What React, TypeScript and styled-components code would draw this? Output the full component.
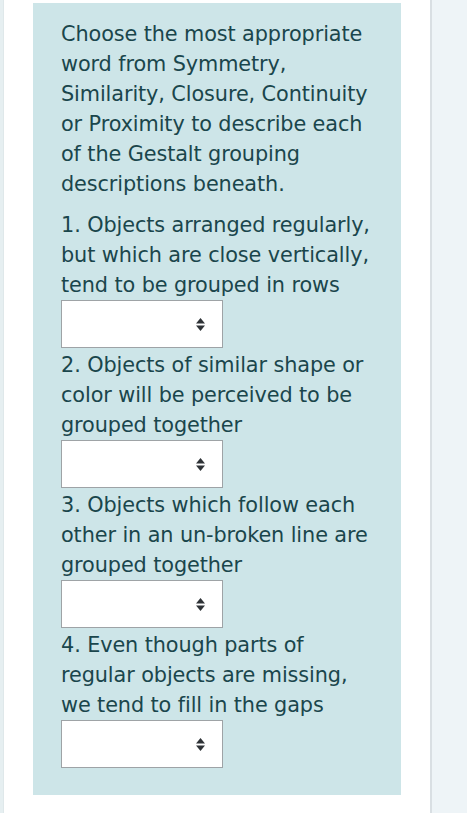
import styled, { createGlobalStyle } from 'styled-components';

const GlobalStyle = createGlobalStyle`
  html, body {
    margin: 0;
    padding: 0;
    background: #ffffff;
  }
  body {
    font-family: "DejaVu Sans", "Noto Sans", sans-serif;
  }
`;

const Page = styled.div`
  display: flex;
  width: 467px;
  height: 813px;
  overflow: hidden;
  background: #ffffff;
`;

const LeftEdge = styled.div`
  width: 3px;
  background: #e6eff1;
  border-right: 1px solid #dfe8ea;
`;

const Main = styled.div`
  width: 426px;
  padding: 3px 0 0 29px;
  box-sizing: border-box;
`;

const Sidebar = styled.div`
  flex: 1;
  border-left: 2px solid #d9dfe3;
  background: #eef4f7;
`;

const Panel = styled.div`
  width: 368px;
  box-sizing: border-box;
  padding: 16px 4px 25px 28px;
  background: #cde5e8;
  color: #1a464c;
`;

const Intro = styled.p`
  margin: 0 0 11px;
  font-size: 20.8px;
  line-height: 30px;
  letter-spacing: -0.1px;
`;

const Question = styled.p`
  margin: 0;
  font-size: 20.8px;
  line-height: 30px;
  letter-spacing: -0.1px;
`;

const Select = styled.div`
  display: flex;
  align-items: center;
  justify-content: flex-end;
  width: 162px;
  height: 48px;
  box-sizing: border-box;
  padding-right: 16px;
  margin-bottom: 2px;
  background: #ffffff;
  border: 1.5px solid #9ea3a6;
`;

const Arrows = () => (
  <svg width="11" height="15" viewBox="0 0 11 15">
    <path d="M5.5 1 L10 6.5 L1 6.5 Z" fill="#2e3236" />
    <path d="M1 8.5 L10 8.5 L5.5 14 Z" fill="#2e3236" />
  </svg>
);

const questions = [
  ['1. Objects arranged regularly,', 'but which are close vertically,', 'tend to be grouped in rows'],
  ['2. Objects of similar shape or', 'color will be perceived to be', 'grouped together'],
  ['3. Objects which follow each', 'other in an un-broken line are', 'grouped together'],
  ['4. Even though parts of', 'regular objects are missing,', 'we tend to fill in the gaps'],
];

const intro = [
  'Choose the most appropriate',
  'word from Symmetry,',
  'Similarity, Closure, Continuity',
  'or Proximity to describe each',
  'of the Gestalt grouping',
  'descriptions beneath.',
];

const Lines = ({ lines }: { lines: string[] }) => (
  <>
    {lines.map((l, i) => (
      <span key={i}>
        {l}
        {i < lines.length - 1 && <br />}
      </span>
    ))}
  </>
);

export default function App() {
  return (
    <Page>
      <GlobalStyle />
      <LeftEdge />
      <Main>
        <Panel>
          <Intro>
            <Lines lines={intro} />
          </Intro>
          {questions.map((q, i) => (
            <div key={i}>
              <Question>
                <Lines lines={q} />
              </Question>
              <Select>
                <Arrows />
              </Select>
            </div>
          ))}
        </Panel>
      </Main>
      <Sidebar />
    </Page>
  );
}
